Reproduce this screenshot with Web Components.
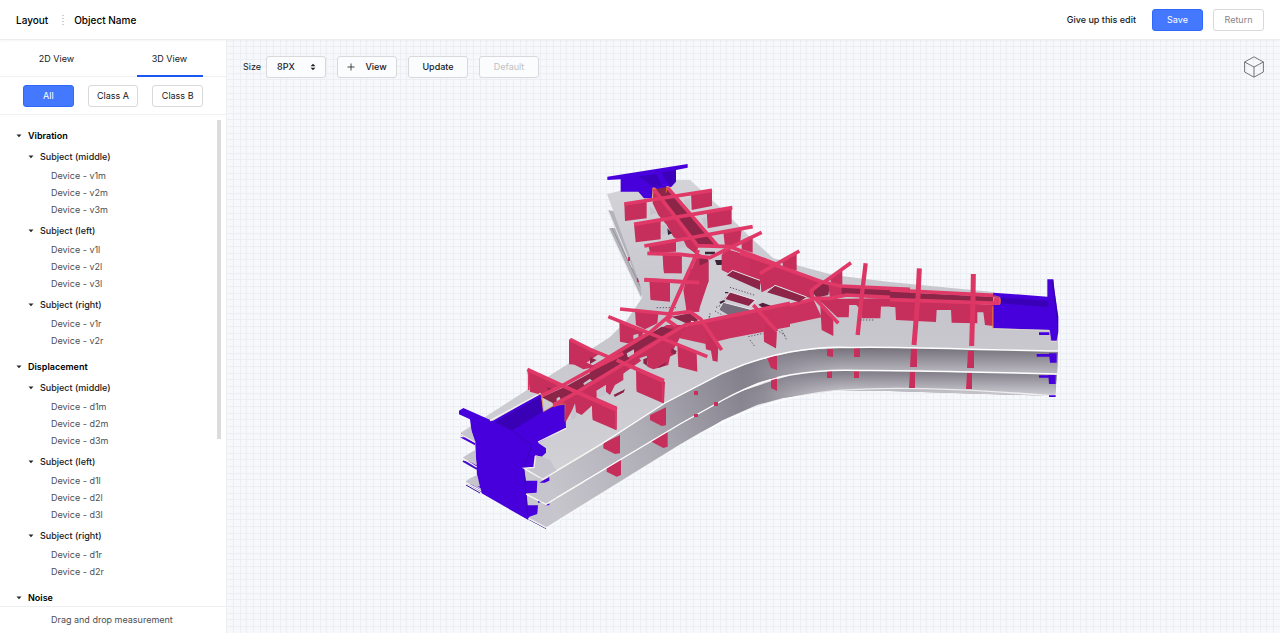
<!DOCTYPE html>
<html lang="en">
<head>
<meta charset="utf-8">
<meta name="viewport" content="width=device-width, initial-scale=1">
<title>Layout - Object Name</title>
<style>
  html, body { height: 100%; margin: 0; }
  body { font: 9px/16px Inter, "Liberation Sans", sans-serif; color: #16181d; background: #fff; }
</style>
</head>
<body>
<layout-editor></layout-editor>

<script>
const define = (name, html, setup) => {
  const template = document.createElement('template');
  template.innerHTML = html;
  customElements.define(name, class extends HTMLElement {
    constructor() {
      super();
      this.attachShadow({ mode: 'open' }).append(template.content.cloneNode(true));
    }
    connectedCallback() {
      if (setup && !this.ready) { this.ready = true; setup(this, this.shadowRoot); }
    }
  });
};

define('ui-button', `
<style>
  :host { display: inline-flex; height: 22px; width: 51px; }
  button {
    flex: 1; display: flex; align-items: center; justify-content: center; gap: 10px;
    box-sizing: border-box; margin: 0; padding: 0; font: inherit; color: inherit;
    background: #fff; border: 1px solid #d9d9dc; border-radius: 3px; cursor: pointer;
  }
  :host([kind="primary"]) button { background: #4479ff; border-color: #2e69fb; color: #fff; }
  :host([kind="quiet"]) button { color: #85868a; }
  :host([wide]) { width: 60px; font-weight: 500; }
  :host([wide]) button { background: #fbfcfd; }
  :host([disabled]) { font-weight: 400; }
  :host([disabled]) button { color: #bfc1c5; cursor: default; }
</style>
<button type="button"><slot name="icon"></slot><slot></slot></button>`,
(host, root) => { root.querySelector('button').disabled = host.hasAttribute('disabled'); });

define('app-header', `
<style>
  :host {
    display: flex; align-items: center; flex: none; height: 39px; padding: 0 16px;
    background: #fff; border-bottom: 1px solid #ebecee; box-shadow: 0 1px 2px #0000000a;
    position: relative; z-index: 1; font-weight: 500;
  }
  nav { display: flex; align-items: center; gap: 10px; font-size: 10px; color: #000; }
  nav svg { margin: 0 0 0 4px; }
  .actions { margin-left: auto; display: flex; align-items: center; gap: 10px; }
  a { color: inherit; text-decoration: none; margin-right: 6px; }
  ui-button { font-weight: 400; }
</style>
<nav aria-label="Breadcrumb">
  <span>Layout</span>
  <svg width="2" height="10" viewBox="0 0 2 10" aria-hidden="true"><path d="M1 0v10" stroke="#9a9ca1" stroke-dasharray="1 2"/></svg>
  <span>Object Name</span>
</nav>
<div class="actions">
  <a href="#discard">Give up this edit</a>
  <ui-button kind="primary">Save</ui-button>
  <ui-button kind="quiet">Return</ui-button>
</div>`);

define('view-tabs', `
<style>
  :host { display: flex; height: 37px; flex: none; border-bottom: 1px solid #f0f1f3; box-sizing: border-box; }
  button {
    flex: 1; display: flex; justify-content: center; padding: 0; margin: 0; border: 0;
    background: none; font: inherit; color: inherit; cursor: pointer; height: 37px;
  }
  span { width: 66px; height: 37px; line-height: 37px; box-sizing: border-box; }
  [aria-selected="true"] span { border-bottom: 2px solid #1a56f0; }
</style>
<div role="tablist" style="display:contents">
  <button role="tab" aria-selected="false" type="button"><span>2D View</span></button>
  <button role="tab" aria-selected="true" type="button"><span>3D View</span></button>
</div>`);

define('tree-branch', `
<style>
  :host { display: block; margin-bottom: 3px; }
  button {
    display: flex; align-items: center; gap: 6px; width: 100%; height: 20px; margin: 0;
    padding: 0 0 0 28px; border: 0; background: none; font: inherit; font-weight: 500;
    color: inherit; text-align: left; cursor: pointer;
  }
  :host([root]) { margin-bottom: 7px; }
  :host([root]) button { height: 22px; padding-left: 16px; font-weight: 600; color: #000; }
  svg { flex: none; }
</style>
<button type="button" aria-expanded="true">
  <svg width="6" height="4" viewBox="0 0 6 4" aria-hidden="true"><path d="M.5.5h5L3 3.3z" fill="#26282c"/></svg>
  <span></span>
</button>
<div role="group"><slot></slot></div>`,
(host, root) => {
  const button = root.querySelector('button');
  root.querySelector('span').textContent = host.getAttribute('label');
  button.addEventListener('click', () => {
    const open = button.getAttribute('aria-expanded') !== 'true';
    button.setAttribute('aria-expanded', open);
    root.querySelector('div').hidden = !open;
  });
});

define('tree-leaf', `
<style>:host { display: block; height: 17px; line-height: 17px; padding-left: 51px; color: #4c4e53; }</style>
<slot></slot>`);

define('side-panel', `
<style>
  :host {
    display: flex; flex-direction: column; flex: none; width: 226px; min-height: 0;
    background: #fff; border-right: 1px solid #eceef1;
  }
  .filters { display: flex; gap: 14px; padding: 8px 23px 7px; border-bottom: 1px solid #f0f1f3; }
  .tree { flex: 1; min-height: 0; position: relative; display: flex; }
  .scroll { flex: 1; overflow-y: auto; scrollbar-width: none; padding-top: 10px; }
  .thumb { position: absolute; right: 5px; top: 5px; width: 4px; height: 65%; background: #dcdcdd; }
  footer { border-top: 1px solid #eceef1; padding: 5px 0 5px 51px; color: #4c4e53; }
</style>
<view-tabs></view-tabs>
<div class="filters">
  <ui-button kind="primary">All</ui-button>
  <ui-button>Class A</ui-button>
  <ui-button>Class B</ui-button>
</div>
<div class="tree">
  <div class="scroll">
    <tree-branch root label="Vibration">
      <tree-branch label="Subject (middle)">
        <tree-leaf>Device - v1m</tree-leaf><tree-leaf>Device - v2m</tree-leaf><tree-leaf>Device - v3m</tree-leaf>
      </tree-branch>
      <tree-branch label="Subject (left)">
        <tree-leaf>Device - v1l</tree-leaf><tree-leaf>Device - v2l</tree-leaf><tree-leaf>Device - v3l</tree-leaf>
      </tree-branch>
      <tree-branch label="Subject (right)">
        <tree-leaf>Device - v1r</tree-leaf><tree-leaf>Device - v2r</tree-leaf>
      </tree-branch>
    </tree-branch>
    <tree-branch root label="Displacement">
      <tree-branch label="Subject (middle)">
        <tree-leaf>Device - d1m</tree-leaf><tree-leaf>Device - d2m</tree-leaf><tree-leaf>Device - d3m</tree-leaf>
      </tree-branch>
      <tree-branch label="Subject (left)">
        <tree-leaf>Device - d1l</tree-leaf><tree-leaf>Device - d2l</tree-leaf><tree-leaf>Device - d3l</tree-leaf>
      </tree-branch>
      <tree-branch label="Subject (right)">
        <tree-leaf>Device - d1r</tree-leaf><tree-leaf>Device - d2r</tree-leaf>
      </tree-branch>
    </tree-branch>
    <tree-branch root label="Noise"></tree-branch>
  </div>
  <div class="thumb"></div>
</div>
<footer>Drag and drop measurement</footer>`);

define('view-toolbar', `
<style>
  :host { display: flex; align-items: center; gap: 11px; font-weight: 500; }
  .size { display: flex; align-items: center; gap: 5px; }
  label { font-weight: 400; }
  .pick { position: relative; display: flex; }
  select {
    appearance: none; box-sizing: border-box; width: 60px; height: 22px; margin: 0; padding: 0 0 0 10px;
    font: inherit; color: inherit; background: #fbfcfd; border: 1px solid #d9d9dc; border-radius: 3px;
  }
  .pick svg { position: absolute; right: 10px; top: 7px; pointer-events: none; }
  .cube {
    margin: 0 0 0 auto; padding: 0; width: 20px; height: 22px; border: 0; background: none; cursor: pointer;
  }
  .cube svg { display: block; }
</style>
<div class="size">
  <label for="size">Size</label>
  <span class="pick">
    <select id="size"><option>8PX</option></select>
    <svg width="6" height="8" viewBox="0 0 6 8" aria-hidden="true"><path d="M3 .8 5.4 3.2H.6zM3 7.2.6 4.8h4.800z" fill="#222"/></svg>
  </span>
</div>
<ui-button wide>
  <svg slot="icon" width="8" height="8" viewBox="0 0 8 8" aria-hidden="true"><path d="M.5 4h7M4 .5v7" stroke="#333" stroke-width=".9"/></svg>
  View
</ui-button>
<ui-button wide>Update</ui-button>
<ui-button wide disabled>Default</ui-button>
<button class="cube" type="button" aria-label="Orientation">
  <svg width="20" height="22" viewBox="0 0 20 22" fill="none" stroke="#666" stroke-width=".9" stroke-linejoin="round">
    <path d="M10 .8 19.4 6v10L10 21.2.6 16V6zM.6 6 10 11l9.4-5M10 11v10"/>
  </svg>
</button>`);

define('building-model', `
<style>
  :host { display: block; }
  svg { display: block; width: 100%; height: auto; }
  .w { fill: #c62f5b; }
  .w2 { fill: #cb315e; }
  .d { fill: #8c2548; }
  .t { fill: none; stroke: #e03968; stroke-width: 11; stroke-linejoin: round; }
  .n { fill: none; stroke: #dc3664; stroke-width: 15; }
  .b { fill: #4700dc; }
  .bd { fill: #3500a8; }
  .g { fill: #c6c4cd; }
  .e { fill: none; stroke: #fff; stroke-width: 1.4; }
  .k { fill: none; stroke: #5d5663; stroke-width: 3; stroke-dasharray: 4 5; }
  .o { fill: none; stroke: #ee8a2a; stroke-width: 2; }
</style>
<svg viewBox="450 155 620 380" role="img" aria-label="Three-wing building structure">
  <defs>
    <linearGradient id="top" x1="0" y1="0" x2="0" y2="1"><stop offset="0" stop-color="#d3d3d8"/><stop offset=".45" stop-color="#c6c5cc"/><stop offset="1" stop-color="#d2d1d6"/></linearGradient>
    <linearGradient id="mid" gradientUnits="userSpaceOnUse" x1="540" y1="500" x2="860" y2="350"><stop offset="0" stop-color="#c9c8cf"/><stop offset=".35" stop-color="#aeacb5"/><stop offset=".7" stop-color="#7f7c87"/><stop offset="1" stop-color="#8d8a95"/></linearGradient>
    <linearGradient id="rgt" gradientUnits="userSpaceOnUse" x1="0" y1="348" x2="0" y2="372"><stop offset="0" stop-color="#75727c"/><stop offset="1" stop-color="#b8b6be"/></linearGradient>
    <linearGradient id="rgt2" gradientUnits="userSpaceOnUse" x1="0" y1="370" x2="0" y2="394"><stop offset="0" stop-color="#7b7883"/><stop offset="1" stop-color="#c9c7ce"/></linearGradient>
    <linearGradient id="fade" gradientUnits="userSpaceOnUse" x1="740" y1="0" x2="840" y2="0"><stop offset="0" stop-color="#fff" stop-opacity="0"/><stop offset="1" stop-color="#fff"/></linearGradient>
    <mask id="m" maskUnits="userSpaceOnUse" x="740" y="300" width="340" height="120"><path d="M740 300h340v120H740z" fill="url(#fade)"/></mask>
  </defs>

  <!-- lower floors, back of the upper wing -->
  <path d="M609 228 616 228 644 285 641 298zM608 210 618 212 645 278 643 292 632 270z" fill="#b4b3bb"/>
  <path d="M609 229 641 298M608 210l24 58" stroke="#e4e4e9" fill="none"/>
  <path d="M612 228 643 292" stroke="#93919b" fill="none"/>
  <path d="M626 238h2v4h-2zM628 257h2v4h-2zM636 258h2v4h-2zM637 278h2v4h-2z" class="w"/>

  <!-- third floor -->
  <path d="M465 483 485 470 620 440 720 398 800 372 910 370 1057 374 1055 396 890 391 833 391 783 398 757 405 723 420 680 445 546 528 528 518z" fill="url(#mid)"/>
  <path d="M740 372 910 370 1057 374 1055 396 890 391 833 391 783 398 740 412z" fill="url(#rgt2)" mask="url(#m)"/>
  <path class="e" d="M464 483l16 9M528 518 546 528 680 445Q757 398 833 391T1055 396" stroke-opacity=".7"/>
  <path d="M466 485l14 8M529 519.500l17 9" stroke="#2a1290" fill="none"/>
  <g transform="translate(450 360) scale(.33333)">
    <path class="w" d="M470 322 513 297V345L500 350 470 335zM605 230 653 210V260L640 264 605 245z"/>
  </g>
  <path class="w" d="M771 376h6v15l-6-3zM827 370h5v8h-5zM854 370h5v8h-5zM910 371h5v17h-6zM967 373h5v16h-6z"/>

  <!-- second floor -->
  <path d="M463 459 485 445 620 420 720 370 800 350 910 348 1058 350 1057 374 890 371 833 370 783 375 757 383 723 400 680 424 546 504 526 494z" fill="url(#mid)"/>
  <path d="M740 350 910 347 1058 350 1057 374 890 371 833 370 783 375 757 383 740 391z" fill="url(#rgt)" mask="url(#m)"/>
  <path class="e" d="M462 460l14 8M526 494 546 504 680 424 723 400Q757 381 790 375T860 370.500C900 370 980 372 1057 374"/>
  <path d="M463 461l14 8M538 502l11-4" stroke="#3a12c0" stroke-width="2" fill="none"/>
  <g transform="translate(450 360) scale(.33333)">
    <path class="w" d="M460 250 510 225V280L495 282 460 265zM600 165 648 142V196L635 198 600 180z"/>
  </g>
  <path class="w" d="M767 358l10-3v15l-6-2zM827 349h6v8l-6-1zM854 348h6v9h-6zM911 349h6v18h-7zM968 351h6v17h-7zM694 391h4v4h-4zM714 402h4v4h-4zM694 414h4v3h-4z"/>

  <!-- top floor -->
  <path d="M607 194 632 188 675 180 690 180 723 210 750 237 773 258 800 266 833 275 890 282 993 292 1058 320V351L910 347.500 850 347 817 349 783 353 757 360 723 373 665 403 603 443 543 479 523 468 460 433 527 390 590 350 610 337 627 320 642 298 640 284z" fill="url(#top)"/>
  <path class="e" d="M460 433l16 9M523 468l20 11 60-36 62-40 58-30Q757 358 790 352T850 347.500C890 346 980 350 1058 351"/>
  <path d="M461 434l15 8M540 478l9-3" stroke="#3a12c0" stroke-width="2" fill="none"/>
  <path d="M708 262 726 260 770 275 812 297 807 304 713 322 695 326z" fill="#cfced5"/>

  <!-- upper wing end -->
  <g transform="translate(590 150) scale(.33333)">
    <path class="b" d="M52 80 293 42V53L258 60V95L243 112 230 108 220 128 190 112 185 145H162L145 125H92V88L52 90z"/>
    <path class="bd" d="M130 82 200 72 215 105 190 112 150 82zM215 66 256 62V95L243 108 225 90z" opacity=".6"/>
  </g>

  <!-- upper wing frame -->
  <g transform="translate(590 150) scale(.33333)">
    <path class="w" d="M190 120 325 290 318 312 250 260 230 225 205 195 188 160z"/>
    <path class="d" d="M195 118 232 110 385 290 325 292z"/>
    <path class="g" d="M280 150l20-4v32l-10-3zM335 205l14-3v30l-5 1zM190 175l10 15-20 5v-25zM215 225l16-1v25l-16 8zM260 275l20-5 10 20-30 10z"/>
    <path d="M232 235l14 15-12 5zM345 305h30v8h-30zM375 330h25l-5 15h-15z" fill="#3b2237"/>
    <path class="w" d="M103 160 170 150V205L105 213zM303 128 366 118V168L305 180zM132 222 212 208V268L137 277zM350 184 425 170V222L353 235zM175 286 258 270V305L180 308zM400 246 455 234 450 285 405 290zM218 312 275 312V370H222zM455 272 488 256V308L455 298z"/>
    <path class="w" d="M178 390H240V455L182 450zM290 395H328V465L290 480zM325 310 355 325V395L328 460V400L290 395z"/>
    <path class="d" d="M328 320 355 330V395L330 420z"/>
    <path class="w2" d="M395 315 410 297 570 345V412L510 400 432 365 415 370 395 360z"/>
    <path class="t" d="M103 162 366 121M132 223 427 173M163 288 488 230M172 310 270 313 360 323 400 303 515 247M163 389 328 398M190 115 325 290M232 112 385 290M320 287 420 290 570 347M325 300 298 360 235 500"/>
    <path class="k" d="M200 473h60"/>
    <path class="o" d="M188 140V114l12 4M228 128l4-18 10 4"/>
  </g>

  <!-- courtyard side and right hub -->
  <g transform="translate(750 230) scale(.33333)">
    <path class="w" d="M0 80 75 105 215 155 185 205 165 200 78 165 35 185 30 150 0 140z"/>
    <path class="w" d="M30 132 75 105V165L35 187zM97 95 140 68V122L100 112z"/>
    <path class="w2" d="M0 255 190 208 215 262 80 290 0 308z"/>
    <path class="w" d="M240 148 277 116V165L245 160z"/>
    <path class="d" d="M195 170 215 157 240 165 235 195 200 203 190 190z"/>
    <path class="d" d="M272 170 480 182V205L272 192z"/>
    <path class="w" d="M205 208 480 203V270H438L436 230H393L391 265H335V240L318 225H298L296 262H262z"/>
    <path class="g" d="M298 226h21v40l-21 3zM393 230h43v38l-43 0z"/>
    <path d="M235 165 275 165 275 195 240 205z" class="w2"/>
    <path class="w" d="M210 212 250 262V318L215 300zM40 262 80 305 78 355 42 335z"/>
    <path class="t" d="M-30 69 75 105 215 155 270 168 480 178M30 130 148 63M222 157 303 98M0 255 190 208 183 183 215 157M195 205 265 280M190 205 240 205 290 195 480 205"/>
    <path class="n" d="M347 100 335 200 323 315" style="stroke-width:13"/>
    <path class="k" d="M95 300l15 30M330 270h40M0 330l15 20"/>
  </g>

  <!-- courtyard openings -->
  <g transform="translate(680 230) scale(.33333)">
    <path class="d" d="M138 135 158 121 240 151V180zM258 186 285 166 380 201 357 216zM133 206 150 186 225 210 207 228z"/>
    <path d="M116 238 130 217 216 240 195 250 150 258z" fill="#756b7b"/>
    <path d="M235 224 248 218 292 234 262 243z" fill="#54203a"/>
    <path d="M258 188 285 166 380 201M138 136l20-15 82 30M135 207l15-21 77 24-20 20M116 240l14-23 86 22" fill="none" stroke="#e7e6ea" stroke-width="3"/>
    <path d="M135 186h10v4h-10zM118 216l14-6 4 4-14 8z" fill="#3b2237"/>
    <path class="k" d="M150 172 225 196M108 232l14-6M88 258l-4 18M105 243l25 14"/>
  </g>

  <!-- right wing -->
  <g transform="translate(890 250) scale(.33333)">
    <path class="w" d="M0 145 310 165V228L285 225 280 187H262V220L185 218 183 180H140L138 216 18 210 17 172 0 170z"/>
    <path class="d" d="M0 125 310 140V158L0 145z"/>
    <path class="t" d="M0 120 312 136 330 143M0 149 330 160"/>
    <path class="n" d="M88 55 84 140 72 285M250 72 249 150 245 288"/>
    <path class="b" d="M310 128 472 140V88H490L493 118 505 200V245L500 272H482L478 240 310 235V165H330V143L310 138z"/>
    <path class="bd" d="M333 143 475 152V172L333 160zM484 92 490 90 493 118 504 200V235z" opacity=".7"/>
    <path class="b" d="M447 247h32v8h-32zM440 312h60v8h-60zM477 310H500V338H480zM447 376h50v7h-50zM475 375H497V402H477zM477 436h20v5h-20z"/>
    <path d="M312 143 332 146V160L312 157z" fill="#e03968"/>
    <path class="o" d="M330 162V142L312 137M308 235V170"/>
    <path d="M310 236 478 241 483 274H500" fill="none" stroke="#e8e6c8" stroke-width="2"/>
  </g>

  <!-- left hub and left wing -->
  <g transform="translate(590 270) scale(.33333)">
    <path class="w" d="M298 0 355 -25V35L325 125H290L280 60z"/>
    <path class="w" d="M180 35H240V92L182 88zM290 40H328V125H290zM218 -40H275V10L222 8z"/>
    <path class="w" d="M135 122 205 130 202 160 165 178 138 165zM88 154 165 180 140 225 90 215z"/>
    <path class="d" d="M245 140 300 130 325 150 300 165z"/>
    <path d="M302 152l10 2-4 10z" fill="#fff"/>
    <path class="w2" d="M330 155 600 100V170L420 205 348 222 270 205 260 180z"/>
    <path class="w" d="M345 210 365 215V243L348 238zM525 160 560 185 558 235 525 215zM335 150 385 225 383 275 368 272 360 225z"/>
    <path class="w" d="M230 165 290 165 250 240 260 250 240 260 235 285 190 298 172 290 170 260 60 340V372L20 345 0 390V290z"/>
    <path class="d" d="M215 170 250 178 60 290 0 330V300z"/>
    <path class="w" d="M262 225 320 250 322 305 265 290zM140 298 225 335 222 400 140 360zM5 382 80 415V480L8 445zM-63 208 30 250-20 285-63 283z"/>
    <path class="g" d="M130 195l15-4v10l-15 7zM148 265l22-8 3 25-8 6zM25 352l25-15v35l-20 8zM110 250l22-12v15l-18 10z"/>
    <path class="d" d="M245 235l15 8-5 10-12-3zM160 268l12-5v25l-12-8zM205 290l25-14-4 9-20 9zM70 375l25-12 8 2-26 14zM0 262l20 8-20 12z"/>
    <path class="t" d="M298 0 235 140 180 187 60 260 0 300M245 135 232 150 258 168M163 30 328 38M90 117 240 132 300 125 332 147 395 240M55 140 352 260M600 100 330 157 285 165 210 210 60 302 0 345M490 105 560 183M-60 208 0 238 90 275 222 332M0 380 80 415"/>
    <path class="k" d="M360 130l-2 20M475 200l45-10M560 180l30 20"/>
  </g>

  <g transform="translate(450 360) scale(.33333)">
    <path class="w" d="M232 30 308 65 330 80 275 105 240 95zM360 -12 440 20 400 28 362 8z"/>
    <path class="d" d="M275 112 345 80 520 -15 540 -5 380 95 310 130z"/>
    <path class="w" d="M310 135 380 98 520 15V60L495 75 480 105 468 95V75L440 92 442 122 395 165 375 155V135L345 190z"/>
    <path class="g" d="M375 130l-10 25v25l15-10zM440 92l28-17v25l-28 15zM320 115l8-5 4 8-12 8zM400 70l20-14 6 6-24 14z"/>
    <path class="w" d="M425 115 500 150 498 210 428 180zM558 28 642 65 640 130 560 95z"/>
    <path class="d" d="M493 105l22-12 10-6-4 10-27 14zM292 82l22 8-18 10z"/>
    <path class="t" d="M232 28 340 78 500 150M268 110 340 75 425 28 520 -20M310 135 380 97 520 12M500 0 640 64"/>
    <path class="n" d="M497 150v58M638 68v60M236 30v60" style="stroke-width:5"/>

    <!-- left wing end -->
    <path class="b" d="M27 152 40 144 128 183 272 100 280 155 310 138 345 132 348 205 264 248 288 265V278L275 290 256 286 252 322 222 325 228 362 262 362 260 398 230 402 233 436 264 436 262 462 238 470 235 480 95 400 92 385 82 378 80 322 78 300 76 250 65 215 60 178 27 163z"/>
    <path class="bd" d="M135 186 270 110 278 155 185 212z" opacity=".75"/>
    <path d="M185 212 245 255 222 325 233 470" stroke="#3500a8" stroke-width="2" fill="none"/>
    <path class="b" d="M30 232l15 0 30 16v8zM42 304h14l24 12v8zM52 372l14 2 28 16v6z"/>
    <path d="M45 215 62 205 76 245 30 222zM50 285 76 270 80 315 38 293zM60 355 82 345 90 380 46 365z" class="g"/>
    <path d="M222 325 254 322 256 286 275 290 300 300 320 333 278 358zM228 400 262 398 264 366 300 366 320 412 288 432zM235 474 262 464 268 436 300 436 320 480 288 502z" class="g"/>
    <path class="b" d="M278 362 298 351V362L284 368H268zM286 436 298 430V436H282z"/>
    <path d="M120 182 272 100M256 288 252 322 222 325 278 358 460 249M348 205 264 246M228 402 288 433 400 366M235 475 288 503M30 222 76 247M38 295 80 321M46 367 93 392" fill="none" stroke="#f4f3ec" stroke-width="4"/>
    <path class="o" d="M262 102 276 105 280 155 310 138 345 132V185"/>
    <path class="t" d="M310 137 340 122"/>
  </g>
</svg>`);

define('model-canvas', `
<style>
  :host {
    display: flex; flex-direction: column; flex: 1; min-width: 0; overflow: hidden;
    background-color: #f6f8fb;
    --line: #ebeff3;
    background-image:
      linear-gradient(90deg, var(--line) 1px, #0000 1px 7px, var(--line) 7px 8px, #0000 8px 13px, var(--line) 13px 14px, #0000 14px),
      linear-gradient(var(--line) 1px, #0000 1px 7px, var(--line) 7px 8px, #0000 8px 13px, var(--line) 13px 14px, #0000 14px);
    background-size: 20px 20px; background-position: 6px 6px;
  }
  view-toolbar { margin: 16px 16px 0; flex: none; }
  .stage { display: grid; justify-items: center; padding: 77px 0 0 13px; }
  building-model { width: 100%; max-width: 620px; }
</style>
<view-toolbar></view-toolbar>
<div class="stage"><building-model></building-model></div>`);

define('layout-editor', `
<style>
  :host { display: flex; flex-direction: column; height: 100vh; }
  main { flex: 1; display: flex; min-height: 0; }
</style>
<app-header></app-header>
<main><side-panel></side-panel><model-canvas></model-canvas></main>`);
</script>
</body>
</html>
